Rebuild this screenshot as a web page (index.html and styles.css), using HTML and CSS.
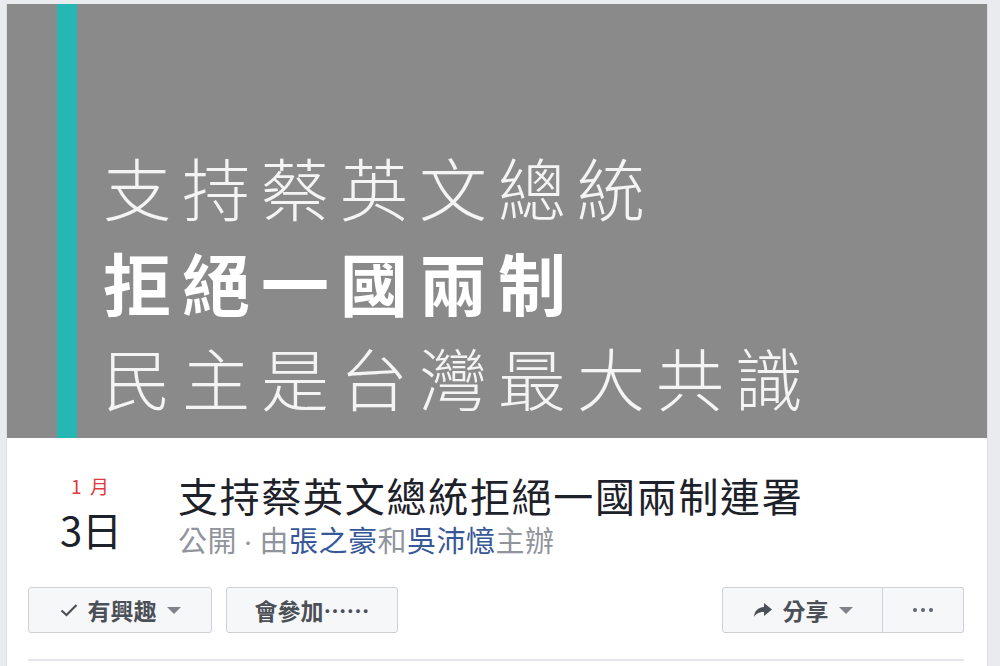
FILE: index.html
```html
<!DOCTYPE html>
<html lang="zh-Hant">
  <head>
    <meta charset="utf-8">
    <title>支持蔡英文總統拒絕一國兩制連署</title>
    <link rel="stylesheet" href="styles.css">
  </head>
  <body>
    <div class="card">
      <!-- cover photo -->
      <div class="cover">
        <div class="cover_bar"></div>
        <div class="cover_text">
          <div class="cover_line light">支持蔡英文總統</div>
          <div class="cover_line bold">拒絕一國兩制</div>
          <div class="cover_line light">民主是台灣最大共識</div>
        </div>
      </div>

      <div class="info">
        <div class="date">
          <div class="month">1&nbsp;月</div>
          <div class="day">3日</div>
        </div>
        <div class="event">
          <div class="event_title">支持蔡英文總統拒絕一國兩制連署</div>
          <div class="event_sub">公開<span class="dot">·</span>由<a href="#">張之豪</a>和<a href="#">吳沛憶</a>主辦</div>
        </div>
      </div>

      <div class="actions">
        <button class="btn btn_interest">
          <svg class="ico" width="18" height="14" viewBox="0 0 18 14"><path d="M1.5 7.5 L6.5 12 L16.5 2" fill="none" stroke="#4b4f56" stroke-width="2.2"/></svg>
          有興趣
          <span class="caret"></span>
        </button>
        <button class="btn btn_going">會參加……</button>
        <div class="spacer"></div>
        <div class="btn_group">
          <button class="btn btn_left">
            <svg class="ico" width="20" height="16" viewBox="0 0 20 16"><path d="M11 1 L19 7.5 L11 14 L11 10 C6 10 3 11.5 1 15 C1.5 9 5 5.5 11 5 Z" fill="#4b4f56"/></svg>
            分享
            <span class="caret"></span>
          </button>
          <button class="btn btn_right"><span class="dots"><i></i><i></i><i></i></span></button>
        </div>
      </div>
      <div class="divider"></div>
    </div>
  </body>
</html>
```

FILE: styles.css
```css
html, body {
  margin: 0;
  padding: 0;
}

body {
  background: #e9ebee;
  font-family: "Noto Sans CJK TC", "Noto Sans", sans-serif;
  width: 1000px;
  height: 666px;
  overflow: hidden;
}

.card {
  margin: 4px 0 0 6px;
  width: 982px;
  height: 662px;
  background: #fff;
  border-left: 1px solid #dddfe2;
  border-right: 1px solid #dddfe2;
  box-sizing: border-box;
}

.cover {
  height: 434px;
  background: #8a8a8a;
  display: flex;
}

.cover_bar {
  width: 20px;
  margin-left: 50px;
  background: #25b7b4;
}

.cover_text {
  margin-left: 26px;
  padding-top: 135px;
  color: #f4f4f4;
}

.cover_line {
  font-size: 68px;
  line-height: 95px;
  letter-spacing: 11px;
  white-space: nowrap;
}

.light {
  font-weight: 300;
}

.bold {
  font-weight: 700;
  color: #fff;
}

.info {
  display: flex;
  padding-top: 33px;
  height: 116px;
  box-sizing: border-box;
}

.date {
  width: 168px;
  text-align: center;
}

.month {
  color: #e0393e;
  font-size: 19px;
  line-height: 24px;
  letter-spacing: 2px;
  margin-top: 3px;
}

.day {
  color: #1d2129;
  font-size: 40px;
  line-height: 46px;
  margin-top: 8px;
}

.event {
  padding-left: 3px;
}

.event_title {
  color: #1d2129;
  font-size: 40px;
  line-height: 48px;
  letter-spacing: 1.7px;
  white-space: nowrap;
}

.event_sub {
  color: #90949c;
  font-size: 29px;
  line-height: 36px;
  margin-top: 2px;
  letter-spacing: 0.5px;
  white-space: nowrap;
}

.event_sub a {
  color: #365899;
  text-decoration: none;
}

.dot {
  font-size: 16px;
  margin: 0 3px;
  vertical-align: 3px;
}

.actions {
  display: flex;
  align-items: center;
  padding: 33px 23px 0 21px;
}

.spacer {
  flex: 1;
}

.btn {
  display: flex;
  align-items: center;
  justify-content: center;
  gap: 10px;
  height: 46px;
  padding: 0 12px;
  margin-right: 14px;
  box-sizing: border-box;
  background: #f6f7f9;
  border: 1px solid #ced0d4;
  border-radius: 3px;
  color: #4b4f56;
  font-family: "Noto Sans CJK TC", "Noto Sans", sans-serif;
  font-size: 23px;
  font-weight: 700;
}

.btn_interest {
  width: 184px;
}

.btn_going {
  width: 172px;
}

.btn_group {
  display: flex;
}

.btn_left {
  width: 161px;
  margin-right: 0;
  border-radius: 3px 0 0 3px;
}

.btn_right {
  width: 81px;
  margin-right: 0;
  border-left: none;
  border-radius: 0 3px 3px 0;
}

.caret {
  width: 0;
  height: 0;
  border-left: 7px solid transparent;
  border-right: 7px solid transparent;
  border-top: 7px solid #7f8389;
}

.dots {
  display: flex;
  gap: 4px;
}

.dots i {
  width: 4px;
  height: 4px;
  border-radius: 50%;
  background: #606770;
}

.divider {
  margin: 26px 23px 0 21px;
  height: 2px;
  background: #e5e6e9;
}
```
